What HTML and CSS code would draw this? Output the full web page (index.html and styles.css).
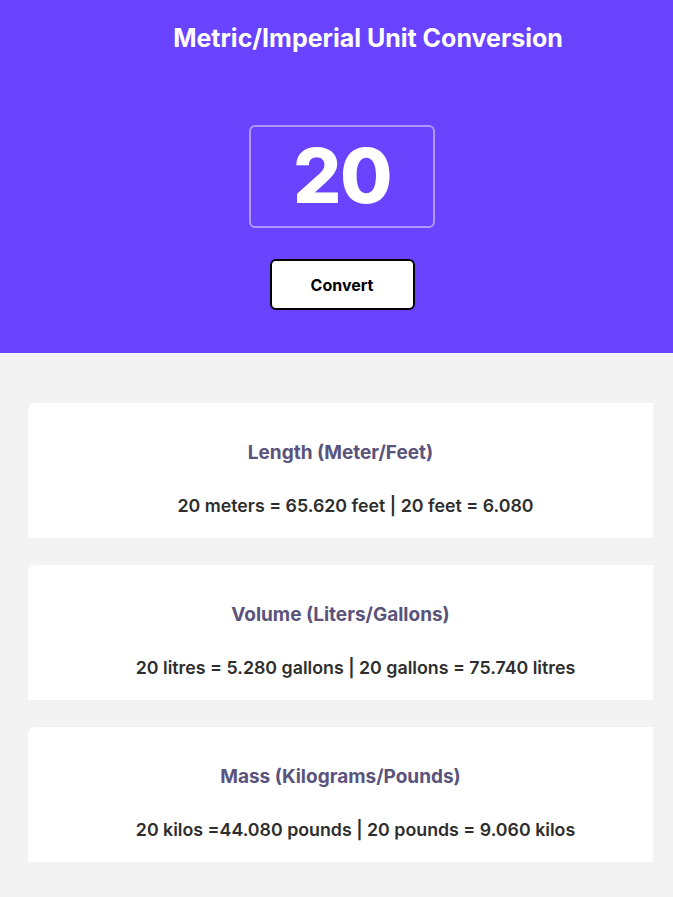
FILE: index.html
```html
<!DOCTYPE html>
<html lang="en">
<head>
<meta charset="utf-8">
<title>Unit Converter</title>
<link rel="stylesheet" href="styles.css">
</head>
<body>
<header class="hero">
  <h1 class="hero-title">Metric/Imperial Unit Conversion</h1>
  <input class="hero-input" type="text" value="20">
  <button class="hero-btn" type="button">Convert</button>
</header>
<main class="results">
  <section class="card">
    <h2 class="card-title">Length (Meter/Feet)</h2>
    <p class="card-text">20 meters = 65.620 feet | 20 feet = 6.080</p>
  </section>
  <section class="card">
    <h2 class="card-title">Volume (Liters/Gallons)</h2>
    <p class="card-text">20 litres = 5.280 gallons | 20 gallons = 75.740 litres</p>
  </section>
  <section class="card">
    <h2 class="card-title">Mass (Kilograms/Pounds)</h2>
    <p class="card-text">20 kilos =44.080 pounds | 20 pounds = 9.060 kilos</p>
  </section>
</main>
</body>
</html>
```
FILE: styles.css
```css
* { box-sizing: border-box; }
html, body { margin: 0; padding: 0; }
body {
  background: #f3f3f3;
  font-family: Inter, "Noto Sans", sans-serif;
}
.hero {
  background: #6943ff;
  height: 353px;
  display: flex;
  flex-direction: column;
  align-items: center;
  padding: 23px 0 0 11px;
}
.hero-title {
  margin: 0;
  padding-left: 52px;
  color: #ffffff;
  font-size: 25px;
  font-weight: 700;
  line-height: 30px;
}
.hero-input {
  margin-top: 72px;
  width: 186px;
  height: 103px;
  border: 2px solid rgba(255, 255, 255, 0.45);
  border-radius: 6px;
  background: transparent;
  color: #ffffff;
  font-family: Inter, sans-serif;
  font-size: 76px;
  font-weight: 800;
  text-align: center;
  padding: 0 0 4px 0;
  outline: none;
  letter-spacing: -1.5px;
}
.hero-btn {
  margin-top: 31px;
  width: 145px;
  height: 51px;
  background: #ffffff;
  border: 2px solid #000000;
  border-radius: 6px;
  font-family: Inter, sans-serif;
  font-size: 16px;
  font-weight: 700;
  color: #000000;
}
.results {
  display: flex;
  flex-direction: column;
  gap: 27px;
  padding: 50px 20px 0 28px;
}
.card {
  background: #ffffff;
  height: 135px;
  border-radius: 7px 0 0 0;
  display: flex;
  flex-direction: column;
  align-items: center;
  padding-top: 38px;
}
.card-title {
  margin: 0;
  color: #5a537b;
  font-size: 19px;
  font-weight: 700;
  line-height: 23px;
}
.card-text {
  margin: 31px 0 0 0;
  padding-left: 30px;
  color: #2e2e2e;
  font-size: 17.8px;
  font-weight: 600;
  line-height: 22px;
}
```
